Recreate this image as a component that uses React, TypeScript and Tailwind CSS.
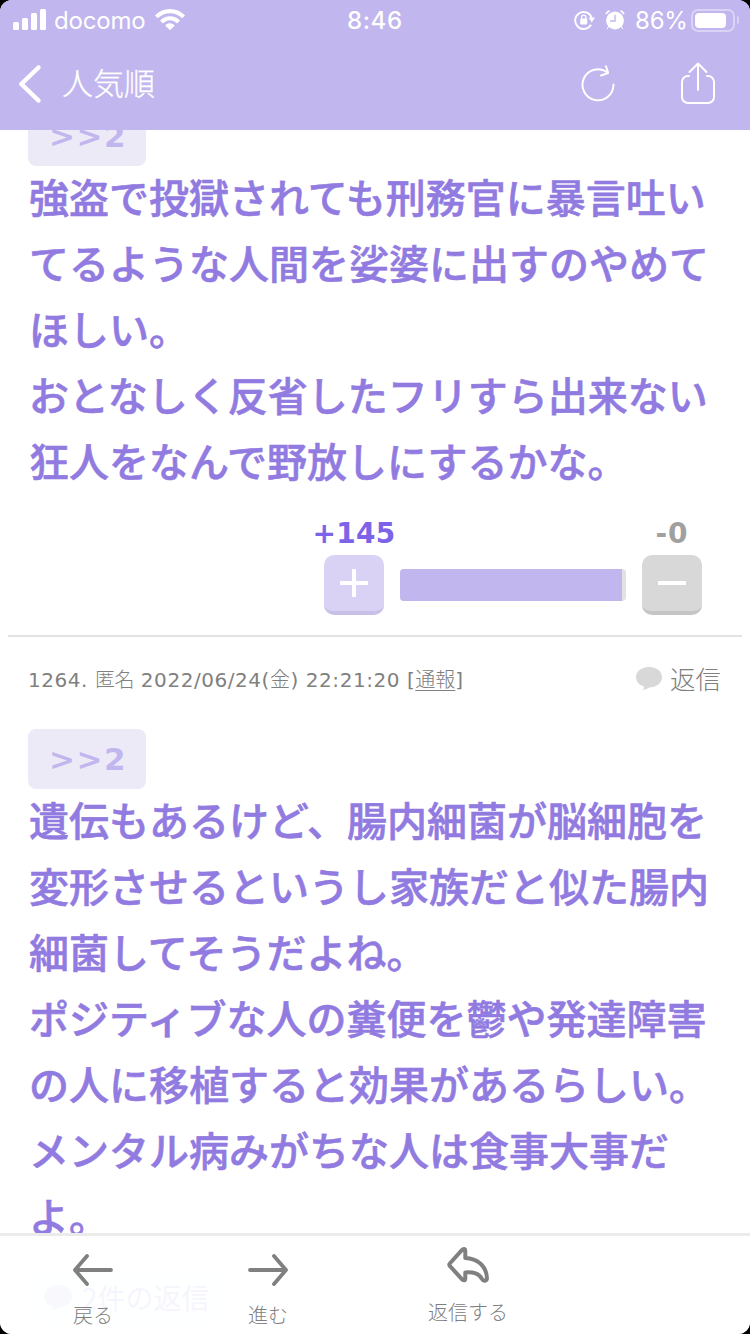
import type { ReactNode } from "react";

const JP = "font-['Inter','Noto_Sans_CJK_JP',sans-serif]";
const VERDANA = "font-['DejaVu_Sans','Noto_Sans_CJK_JP',sans-serif]";

const FIRST_COMMENT = [
  "強盗で投獄されても刑務官に暴言吐い",
  "てるような人間を娑婆に出すのやめて",
  "ほしい。",
  "おとなしく反省したフリすら出来ない",
  "狂人をなんで野放しにするかな。",
];

const SECOND_COMMENT = [
  "遺伝もあるけど、腸内細菌が脳細胞を",
  "変形させるというし家族だと似た腸内",
  "細菌してそうだよね。",
  "ポジティブな人の糞便を鬱や発達障害",
  "の人に移植すると効果があるらしい。",
  "メンタル病みがちな人は食事大事だ",
  "よ。",
];

function Bubble({ className }: { className: string }) {
  return (
    <svg viewBox="0 0 26 23" className={className} fill="currentColor">
      <path d="M13 0C5.600 0 0 4.200 0 10.300c0 4.400 3 7.700 7.800 9.300.2 1.300-.1 2.400-.8 3.400 2.700-.4 4.700-1.300 6.200-2.500C20.500 20.400 26 16.300 26 10.300 26 4.200 20.400 0 13 0z" />
    </svg>
  );
}

function StatusBar() {
  return (
    <div className="flex h-10 items-center text-white">
      <svg viewBox="0 0 34 22" className="ml-[13px] h-[22px] w-[34px] shrink-0" fill="currentColor">
        <rect x="0" y="13" width="6" height="8" rx="1.500" />
        <rect x="9" y="9" width="6" height="12" rx="1.500" />
        <rect x="18" y="4" width="6" height="17" rx="1.500" />
        <rect x="27" y="0" width="6" height="21" rx="1.500" />
      </svg>
      <span className="mt-[2px] ml-[7px] w-[92px] text-[24px] leading-10 tracking-[-0.2px]">docomo</span>
      <svg viewBox="0 0 30 22" className="ml-[9px] h-[22px] w-[30px] shrink-0" fill="currentColor">
        <path d="M15 0C9.300 0 4.200 2.200.4 5.900a.7.7 0 0 0 0 1l1.900 1.900a.7.7 0 0 0 1 0C6.400 5.900 10.500 4.200 15 4.200s8.600 1.700 11.700 4.600a.7.7 0 0 0 1 0l1.900-1.900a.7.7 0 0 0 0-1C25.800 2.200 20.700 0 15 0z" />
        <path d="M15 7.300c-3.700 0-7 1.400-9.500 3.700a.7.7 0 0 0 0 1l1.900 1.900a.7.7 0 0 0 1 0 9.700 9.700 0 0 1 13.200 0 .7.7 0 0 0 1 0l1.900-1.900a.7.7 0 0 0 0-1A13.900 13.900 0 0 0 15 7.300z" />
        <path d="M15 14.300c-1.700 0-3.200.6-4.400 1.600a.7.7 0 0 0 0 1l3.900 3.900a.7.7 0 0 0 1 0l3.900-3.900a.7.7 0 0 0 0-1 6.800 6.800 0 0 0-4.400-1.600z" />
      </svg>
      <span className="mt-[2px] ml-[162px] w-[60px] text-[24px] font-medium tracking-[0.6px]">8:46</span>
      <svg viewBox="0 0 22 20" className="ml-[167px] h-[20px] w-[22px] shrink-0" fill="none" stroke="currentColor">
        <path d="M17 14.800A8.500 8.500 0 1 1 17.600 7.500" strokeWidth="1.900" />
        <path d="M14.500 7.500h6.500l-3.200 5z" fill="currentColor" stroke="none" />
        <rect x="6.200" y="8.600" width="7" height="6" rx="0.800" fill="currentColor" stroke="none" />
        <path d="M7.600 9V7.200a2.100 2.100 0 0 1 4.200 0V9" strokeWidth="1.300" />
      </svg>
      <svg viewBox="0 0 20 20" className="ml-[9px] h-[20px] w-[20px] shrink-0">
        <path d="M1 4.200A3 3 0 0 1 4.600 1zM19 4.200A3 3 0 0 0 15.400 1zM3.800 16l-1.600 3M16.200 16l1.600 3" fill="white" stroke="white" />
        <circle cx="10" cy="10.500" r="8.900" fill="white" />
        <path d="M10 5v6H5" fill="none" stroke="#c1b6ee" strokeWidth="1.400" />
      </svg>
      <span className="mt-[2px] ml-[10px] w-[54px] text-[24px] tracking-[-0.2px]">86%</span>
      <div className="ml-[2px] h-[23px] w-[44px] rounded-[7px] border-2 border-white/40 p-[2px]">
        <div className="h-[15px] w-[31px] rounded-[4px] bg-white" />
      </div>
      <div className="ml-[2px] h-[8px] w-[2px] rounded-r-full bg-white/40" />
    </div>
  );
}

function Header() {
  return (
    <header className={`${JP} relative z-10 h-[130px] shrink-0 bg-[#c1b6ee]`}>
      <StatusBar />
      <div className="flex h-[88px] items-center text-white">
        <svg viewBox="0 0 24 40" className="ml-[18px] h-[40px] w-[24px]" fill="none" stroke="currentColor" strokeWidth="4.500" strokeLinecap="round" strokeLinejoin="round">
          <path d="M20.500 3.500 3.300 20l17.200 16.500" />
        </svg>
        <h1 className="mt-px ml-[20px] text-[31px] font-light [-webkit-text-stroke:0.3px]">人気順</h1>
        <svg viewBox="0 0 34 38" className="mb-[3px] ml-auto h-[38px] w-[34px]" fill="none" stroke="currentColor" strokeWidth="2" strokeLinecap="round" strokeLinejoin="round">
          <path d="M32.500 20.500A15.500 15.500 0 1 1 26.500 8.500" />
          <path d="M25 2.200 27.200 9 20 11.500" />
        </svg>
        <svg viewBox="0 0 34 42" className="mr-[35px] mb-[2px] ml-[66px] h-[42px] w-[34px]" fill="none" stroke="currentColor" strokeWidth="2" strokeLinecap="round" strokeLinejoin="round">
          <path d="M8 14H7a6 6 0 0 0-6 6v15a6 6 0 0 0 6 6h20a6 6 0 0 0 6-6V20a6 6 0 0 0-6-6h-1" />
          <path d="M17 28V1.500M8.500 10 17 1.500 25.500 10" />
        </svg>
      </div>
    </header>
  );
}

function Comment({ lines }: { lines: string[] }) {
  return (
    <div className="flex flex-col">
      <a className={`${VERDANA} flex h-[60px] w-[118px] items-center justify-center rounded-[8px] bg-[#edeaf8] pl-[2px] text-[31px] font-bold tracking-[1.500px] text-[#c1b6ee]`}>
        &gt;&gt;2
      </a>
      <p className="-mt-[3px] mb-[3px] ml-px font-['Noto_Sans_CJK_JP',sans-serif] text-[40px] leading-[66px] font-medium text-[#917be1] [-webkit-text-stroke:0.6px]">
        {lines.map((line) => (
          <span key={line} className="block whitespace-nowrap">
            {line}
          </span>
        ))}
      </p>
    </div>
  );
}

function Votes() {
  return (
    <div className={`${VERDANA} mt-[20px] flex h-[99px] justify-end pr-[20px] text-[28px] leading-[36px] font-bold`}>
      <div className="flex w-[60px] flex-col items-center">
        <span className="h-[39px] tracking-[0.3px] text-[#7d63e8]">+145</span>
        <button className="flex h-[60px] w-[60px] items-center justify-center rounded-[10px] border-b-4 border-[#c9c0e8] bg-[#dad2f5]">
          <svg viewBox="0 0 28 28" className="h-7 w-7" stroke="white" strokeWidth="4">
            <path d="M14 0v28M0 14h28" />
          </svg>
        </button>
      </div>
      <div className="mx-4 mt-[53px] h-8 w-[226px] overflow-hidden rounded-[4px] bg-[#e2e2e2]">
        <div className="h-full w-[222px] bg-[#c1b6ee]" />
      </div>
      <div className="flex w-[60px] flex-col items-center">
        <span className="h-[39px] tracking-[1px] text-[#a0a0a0]">-0</span>
        <button className="flex h-[60px] w-[60px] items-center justify-center rounded-[10px] border-b-4 border-[#c5c5c5] bg-[#d8d8d8]">
          <svg viewBox="0 0 28 28" className="h-7 w-7" stroke="white" strokeWidth="4">
            <path d="M0 14h28" />
          </svg>
        </button>
      </div>
    </div>
  );
}

function Meta() {
  return (
    <div className="flex h-[92px] items-center pb-[6px] text-[#808080]">
      <span className={`${VERDANA} text-[20px] tracking-[0.550px] whitespace-nowrap`}>
        1264. <span className="font-light tracking-[-0.5px]">匿名</span> 2022/06/24(<span className="font-light">金</span>) 22:21:20 [
        <u className="font-light tracking-normal underline decoration-1 underline-offset-[3px]">通報</u>]
      </span>
      <Bubble className="mb-[3px] ml-auto h-[23px] w-[26px] text-[#d8d8d8]" />
      <span className="mr-px mb-[3px] ml-[8px] font-['Noto_Sans_CJK_JP',sans-serif] text-[25.500px] font-light">返信</span>
    </div>
  );
}

function FooterItem({ label, className, children }: { label: string; className: string; children: ReactNode }) {
  return (
    <button className={`flex flex-col items-center ${className}`}>
      {children}
      <span className="text-[20px] leading-[30px] font-light">{label}</span>
    </button>
  );
}

function Footer() {
  return (
    <footer className="absolute inset-x-0 bottom-0 z-10 flex h-[101px] items-start border-t-[3px] border-[#ebebeb] bg-white/90 bg-clip-padding font-['Noto_Sans_CJK_JP',sans-serif] text-[#808080]">
      <FooterItem label="戻る" className="ml-[63px] w-[60px] pt-[18px]">
        <svg viewBox="0 0 40 32" className="mb-[14px] h-8 w-10" fill="none" stroke="currentColor" strokeWidth="3.800" strokeLinecap="round" strokeLinejoin="round">
          <path d="M38 16H2M14 2 2 16l12 14" />
        </svg>
      </FooterItem>
      <FooterItem label="進む" className="ml-[115px] w-[60px] pt-[18px]">
        <svg viewBox="0 0 40 32" className="mb-[14px] h-8 w-10" fill="none" stroke="currentColor" strokeWidth="3.800" strokeLinecap="round" strokeLinejoin="round">
          <path d="M2 16h36M26 2l12 14-12 14" />
        </svg>
      </FooterItem>
      <FooterItem label="返信する" className="ml-[120px] w-[100px] pt-[11px]">
        <svg viewBox="0 0 42 36" className="mb-[14px] h-9 w-[42px]" fill="none" stroke="currentColor" strokeWidth="4" strokeLinejoin="round">
          <path d="M15.300 2.700 2.800 16.500q-1 1.200 0 2.400L15.300 32.600q3 2 3-1.200v-6c8.500-.4 13.500.8 16.700 6.600 1.800 3 5.200 2 4.900-1.600C39 18.500 30.500 11.500 18.300 11V4q0-3-3-1.300z" />
        </svg>
      </FooterItem>
    </footer>
  );
}

export default function App() {
  return (
    <div className="h-[1334px] w-[750px] bg-black">
      <div className="relative flex h-full flex-col overflow-hidden rounded-[12px] bg-white">
        <Header />
        <main className="-mt-6 min-h-0 flex-1 overflow-hidden px-2">
          <article className="h-[531px] border-b-2 border-[#e2e2e2] px-5">
            <Comment lines={FIRST_COMMENT} />
            <Votes />
          </article>
          <article className="px-5">
            <Meta />
            <Comment lines={SECOND_COMMENT} />
            <div className="mt-[19px] flex h-[54px] w-[200px] items-center rounded-[8px] bg-[#fafafe] pl-4 font-['Noto_Sans_CJK_JP',sans-serif] text-[28px] text-[#a796ea]">
              <Bubble className="mr-[10px] h-[25px] w-[28px] text-[#c1b6ee]" />
              2件の返信
            </div>
          </article>
        </main>
        <Footer />
      </div>
    </div>
  );
}
